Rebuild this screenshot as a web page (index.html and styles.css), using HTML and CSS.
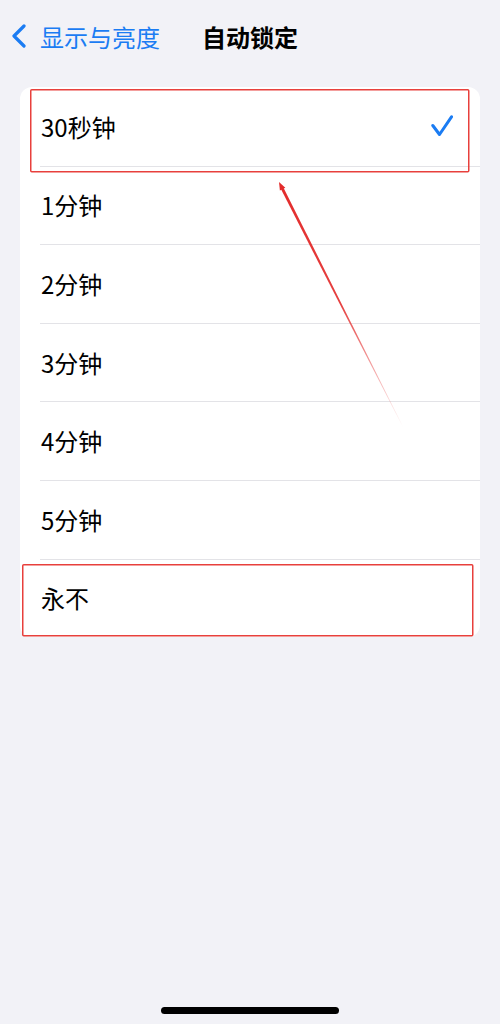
FILE: index.html
```html
<!DOCTYPE html>
<html lang="zh-CN">
<head>
    <meta charset="UTF-8">
    <meta name="viewport" content="width=device-width, initial-scale=1.0">
    <title>自动锁定</title>
    <link rel="stylesheet" href="styles.css">
</head>
<body>
    <div class="screen">
        <header class="nav-bar">
            <a class="nav-back" href="#">
                <svg class="chevron" width="16" height="24" viewBox="0 0 16 24">
                    <path d="M13 2 L3 12 L13 22" fill="none" stroke="currentColor" stroke-width="3.2" stroke-linecap="round" stroke-linejoin="round"/>
                </svg>
                <span>显示与亮度</span>
            </a>
            <h1 class="nav-title">自动锁定</h1>
            <div></div>
        </header>

        <ul class="option-list">
            <li class="option selected">
                <span>30秒钟</span>
                <svg class="check" width="22" height="22" viewBox="0 0 22 22">
                    <path d="M1.8 10.5 L8.5 19.5 L20.5 1.8" fill="none" stroke="currentColor" stroke-width="3" stroke-linecap="round" stroke-linejoin="round"/>
                </svg>
            </li>
            <li class="option"><span>1分钟</span></li>
            <li class="option"><span>2分钟</span></li>
            <li class="option"><span>3分钟</span></li>
            <li class="option"><span>4分钟</span></li>
            <li class="option"><span>5分钟</span></li>
            <li class="option"><span>永不</span></li>
        </ul>

        <div class="home-indicator"></div>

        <!-- red markup drawn over the list -->
        <svg class="markup" width="500" height="1024" viewBox="0 0 500 1024">
            <defs>
                <linearGradient id="arrowFade" gradientUnits="userSpaceOnUse" x1="279" y1="182" x2="403" y2="427">
                    <stop offset="0" stop-color="#e32b2b" stop-opacity="1"/>
                    <stop offset="0.5" stop-color="#e32b2b" stop-opacity="0.9"/>
                    <stop offset="1" stop-color="#e32b2b" stop-opacity="0"/>
                </linearGradient>
            </defs>
            <rect x="30.75" y="89.75" width="438" height="82" rx="1" fill="none" stroke="#e8403c" stroke-width="1.5"/>
            <rect x="22.75" y="564.75" width="450" height="71" rx="1" fill="none" stroke="#e8403c" stroke-width="1.5"/>
            <polygon points="280.4,188.1 283,186.8 403.3,426.9 402.7,427.1" fill="url(#arrowFade)"/>
            <polygon points="279,182 285.3,187.8 279.9,190.5" fill="#e32b2b"/>
        </svg>
    </div>
</body>
</html>
```

FILE: styles.css
```css
* {
    box-sizing: border-box;
}
body {
    margin: 0;
    padding: 0;
    background-color: #f2f2f7;
    font-family: "Noto Sans CJK SC", "Noto Sans", sans-serif;
    color: #000;
}
.screen {
    position: relative;
    width: 500px;
    height: 1024px;
    overflow: hidden;
}
.nav-bar {
    display: grid;
    grid-template-columns: 1fr auto 1fr;
    align-items: center;
    height: 72px;
}
.nav-back {
    display: flex;
    align-items: center;
    gap: 13px;
    padding-left: 11px;
    color: #1b7cf3;
    text-decoration: none;
    font-size: 24px;
    white-space: nowrap;
}
.chevron {
    display: block;
}
.nav-title {
    margin: 0;
    font-size: 24px;
    font-weight: 700;
    letter-spacing: 0;
}
.option-list {
    list-style: none;
    margin: 15px 20px 0;
    padding: 0;
    background: #fff;
    border-radius: 12px;
    overflow: hidden;
}
.option {
    position: relative;
    display: flex;
    align-items: center;
    justify-content: space-between;
    height: 78.6px;
    padding: 0 27px 0 21px;
    font-size: 24px;
}
.option + .option::before {
    content: "";
    position: absolute;
    top: 0;
    left: 20px;
    right: 0;
    height: 1px;
    background: #e3e3e7;
}
.check {
    color: #1b7cf3;
    display: block;
}
.home-indicator {
    position: absolute;
    left: 161px;
    bottom: 10px;
    width: 178px;
    height: 7px;
    border-radius: 4px;
    background: #000;
}
.markup {
    position: absolute;
    top: 0;
    left: 0;
    pointer-events: none;
}
```
